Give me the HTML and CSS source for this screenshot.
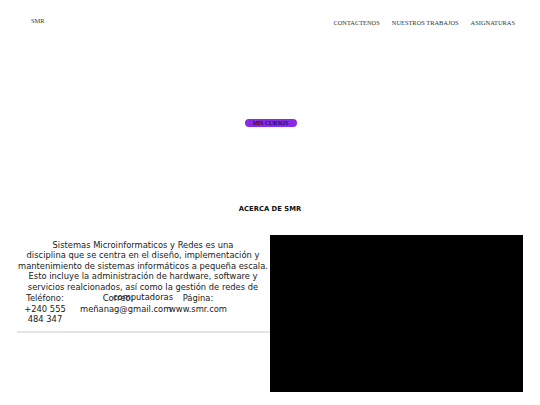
FILE: index.html
```html
<!DOCTYPE html>
<html lang="es">
<head>
<meta charset="utf-8">
<title>SMR</title>
<link rel="stylesheet" href="styles.css">
</head>
<body>
<header class="top">
  <div class="brand">SMR</div>
  <nav class="nav">
    <a class="nav-link" href="#">CONTACTENOS</a>
    <a class="nav-link" href="#">NUESTROS TRABAJOS</a>
    <a class="nav-link" href="#">ASIGNATURAS</a>
  </nav>
</header>
<section class="hero">
  <a class="btn" href="#">MIS CURSOS</a>
</section>
<h2 class="about-title">ACERCA DE SMR</h2>
<section class="about">
  <div class="info">
    <p class="desc">Sistemas Microinformaticos y Redes es una<br>disciplina que se centra en el diseño, implementación y mantenimiento de sistemas informáticos a pequeña escala. Esto incluye la administración de hardware, software y servicios realcionados, así como la gestión de redes de computadoras</p>
    <div class="contacts">
      <div class="contact"><span class="label">Teléfono:</span> +240 555 484 347</div>
      <div class="contact"><span class="label">Correo:</span> meñanag@gmail.com</div>
      <div class="contact"><span class="label">Página:</span> www.smr.com</div>
    </div>
    <div class="rule"></div>
  </div>
  <div class="video"></div>
</section>
</body>
</html>
```
FILE: styles.css
```css
html, body {
  margin: 0;
  background: #fff;
}
body {
  font-family: "DejaVu Sans", Verdana, sans-serif;
  color: #1a1a1a;
}
.top {
  display: flex;
  justify-content: space-between;
  align-items: flex-start;
  height: 40px;
  box-sizing: border-box;
  padding: 17px 25px 0 31px;
  font-family: "Liberation Serif", "Times New Roman", serif;
  font-size: 6.4px;
  line-height: 7px;
  color: #333;
}
.nav {
  display: flex;
  gap: 12px;
  margin-top: 2px;
}
.nav-link {
  color: #333;
  text-decoration: none;
}
.hero {
  height: 150px;
  box-sizing: border-box;
  padding-top: 79px;
  display: flex;
  justify-content: center;
  align-items: flex-start;
}
.btn {
  display: block;
  width: 52px;
  height: 8px;
  line-height: 8px;
  border-radius: 10px;
  background: #8a2be2;
  color: #000;
  text-align: center;
  text-decoration: none;
  font-family: "Liberation Serif", "Times New Roman", serif;
  font-size: 6px;
  margin-left: 1px;
}
.about-title {
  margin: 15px 0 0;
  text-align: center;
  font-size: 6.8px;
  line-height: 8px;
  font-weight: bold;
  color: #111;
}
.about {
  display: flex;
  margin-top: 22px;
}
.info {
  width: 270px;
}
.desc {
  margin: 0 0 0 14px;
  width: 258px;
  height: 53px;
  padding-top: 5px;
  font-size: 8.35px;
  line-height: 10.4px;
  text-align: center;
}
.contacts {
  display: grid;
  grid-template-columns: 60px 76px 74px;
  column-gap: 5px;
  padding-left: 15px;
  font-size: 8.35px;
  line-height: 10.7px;
  text-align: center;
}
.label {
  display: block;
}
.rule {
  margin: 6px 0 0 17px;
  height: 2px;
  background: #e4e4e4;
}
.video {
  width: 253px;
  height: 157px;
  background: #000;
}
```
